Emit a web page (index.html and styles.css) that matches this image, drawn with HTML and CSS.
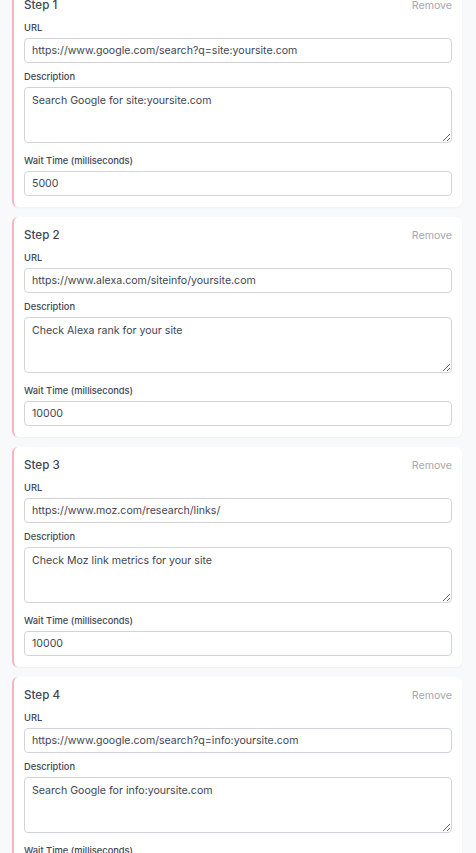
FILE: index.html
```html
<!DOCTYPE html>
<html lang="en">
<head>
<meta charset="utf-8">
<title>Steps</title>
<link rel="stylesheet" href="styles.css">
</head>
<body>
<div class="steps">
  <section class="card">
    <div class="card-head"><h3 class="step-title">Step 1</h3><button class="remove">Remove</button></div>
    <label class="field-label">URL</label>
    <input class="field-input" type="text" value="https://www.google.com/search?q=site:yoursite.com">
    <label class="field-label">Description</label>
    <textarea class="field-area">Search Google for site:yoursite.com</textarea>
    <label class="field-label">Wait Time (milliseconds)</label>
    <input class="field-input" type="text" value="5000">
  </section>
  <section class="card">
    <div class="card-head"><h3 class="step-title">Step 2</h3><button class="remove">Remove</button></div>
    <label class="field-label">URL</label>
    <input class="field-input" type="text" value="https://www.alexa.com/siteinfo/yoursite.com">
    <label class="field-label">Description</label>
    <textarea class="field-area">Check Alexa rank for your site</textarea>
    <label class="field-label">Wait Time (milliseconds)</label>
    <input class="field-input" type="text" value="10000">
  </section>
  <section class="card">
    <div class="card-head"><h3 class="step-title">Step 3</h3><button class="remove">Remove</button></div>
    <label class="field-label">URL</label>
    <input class="field-input" type="text" value="https://www.moz.com/research/links/">
    <label class="field-label">Description</label>
    <textarea class="field-area">Check Moz link metrics for your site</textarea>
    <label class="field-label">Wait Time (milliseconds)</label>
    <input class="field-input" type="text" value="10000">
  </section>
  <section class="card">
    <div class="card-head"><h3 class="step-title">Step 4</h3><button class="remove">Remove</button></div>
    <label class="field-label">URL</label>
    <input class="field-input" type="text" value="https://www.google.com/search?q=info:yoursite.com">
    <label class="field-label">Description</label>
    <textarea class="field-area">Search Google for info:yoursite.com</textarea>
    <label class="field-label">Wait Time (milliseconds)</label>
    <input class="field-input" type="text" value="10000">
  </section>
</div>
</body>
</html>
```
FILE: styles.css
```css
html, body {
  margin: 0;
  padding: 0;
  background: #f8f9fb;
  overflow: hidden;
}
body {
  font-family: Inter, "Liberation Sans", sans-serif;
  color: #374151;
}
.steps {
  display: flex;
  flex-direction: column;
  gap: 10px;
  margin-top: -13px;
  padding: 0 14px 0 12px;
}
.card {
  background: #ffffff;
  border-left: 2px solid #fbb3bf;
  border-radius: 6px;
  box-shadow: 0 1px 2px rgba(17, 24, 39, 0.04);
  padding: 10px 10px 11px 10px;
  display: flex;
  flex-direction: column;
}
.card-head {
  display: flex;
  justify-content: space-between;
  align-items: center;
  height: 16px;
  margin-bottom: 9px;
}
.step-title {
  margin: 0;
  font-size: 11.6px;
  font-weight: 500;
  color: #3f4654;
  line-height: 16px;
}
.remove {
  background: none;
  border: 0;
  padding: 0;
  font-family: inherit;
  font-size: 10.6px;
  color: #a3a9b4;
  cursor: pointer;
}
.field-label {
  display: block;
  font-size: 9.3px;
  font-weight: 500;
  line-height: 12px;
  color: #3f4654;
  margin-bottom: 4px;
}
.field-input,
.field-area {
  display: block;
  box-sizing: border-box;
  width: 100%;
  margin: 0;
  border: 1px solid #d1d5db;
  border-radius: 4px;
  background: #ffffff;
  font-family: inherit;
  font-size: 10.6px;
  color: #3f4654;
  padding: 0 7px;
}
.field-input {
  height: 25px;
  margin-bottom: 8px;
}
.field-input:last-child {
  margin-bottom: 0;
}
.field-area {
  height: 56px;
  padding-top: 6px;
  resize: vertical;
  margin-bottom: 12px;
  line-height: 14px;
}
```
